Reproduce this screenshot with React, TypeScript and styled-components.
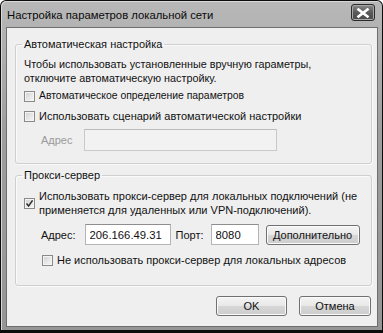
import styled, { createGlobalStyle } from "styled-components";

const GlobalStyle = createGlobalStyle`
  html, body {
    margin: 0;
    padding: 0;
    background: #ffffff;
  }
  body {
    font-family: "Liberation Sans", Arial, sans-serif;
    font-size: 11px;
    color: #111;
  }
`;

export default function App() {
  return (
    <>
      <GlobalStyle />
      <Window>
        <TitleBar>
          <Title>Настройка параметров локальной сети</Title>
          <CloseButton aria-label="Закрыть">
            <svg width="14" height="10" viewBox="0 0 14 10">
              <path d="M2.5 1.5 L11.5 8.5 M11.5 1.5 L2.5 8.5" stroke="#fff" strokeWidth="2.6" strokeLinecap="square" />
            </svg>
          </CloseButton>
        </TitleBar>
        <Body>
          <Group $bottom={12}>
            <Legend>Автоматическая настройка</Legend>
            <Hint>
              Чтобы использовать установленные вручную гараметры,
              <br />
              отключите автоматическую настройку.
            </Hint>
            <CheckRow $top={4}>
              <CheckBox />
              <Label $small>Автоматическое определение параметров</Label>
            </CheckRow>
            <CheckRow $top={6}>
              <CheckBox />
              <Label>Использовать сценарий автоматической настройки</Label>
            </CheckRow>
            <FieldRow $top={6} $indent={17}>
              <Caption $disabled $gap={11}>Адрес</Caption>
              <TextBox $width={193} $disabled readOnly value="" />
            </FieldRow>
          </Group>

          <Group $top={4} $bottom={18}>
            <Legend>Прокси-сервер</Legend>
            <CheckRow $top={6}>
              <CheckBox checked />
              <Label>
                Использовать прокси-сервер для локальных подключений (не
                <br />
                применяется для удаленных или VPN-подключений).
              </Label>
            </CheckRow>
            <FieldRow $top={7} $indent={17}>
              <Caption $gap={9}>Адрес:</Caption>
              <TextBox $width={86} readOnly value="206.166.49.31" />
              <Caption $lead={5} $gap={7}>Порт:</Caption>
              <TextBox $width={48} readOnly value="8080" />
              <Button $width={94} $lead={7}>Дополнительно</Button>
            </FieldRow>
            <CheckRow $top={8} $indent={18}>
              <CheckBox />
              <Label>Не использовать прокси-сервер для локальных адресов</Label>
            </CheckRow>
          </Group>

          <Footer>
            <Button $width={71}>OK</Button>
            <Button $width={72}>Отмена</Button>
          </Footer>
        </Body>
      </Window>
    </>
  );
}

function CheckBox({ checked = false }: { checked?: boolean }) {
  return (
    <Box>
      {checked && (
        <svg width="9" height="9" viewBox="0 0 9 9">
          <path d="M1.5 4.5 L3.6 7 L7.6 1.4" fill="none" stroke="#333" strokeWidth="1.6" />
        </svg>
      )}
    </Box>
  );
}

const Window = styled.div`
  width: 383px;
  height: 333px;
  box-sizing: border-box;
  border: 1px solid #0c0c0c;
  border-bottom-width: 3px;
  border-radius: 6px 6px 0 0;
  background: linear-gradient(180deg, #b8b8b8 0%, #9e9e9e 40%, #959595 100%);
  display: flex;
  flex-direction: column;
  padding: 0 4px 3px 5px;
  box-shadow: inset 1px 1px 0 #d8d8d8;
  overflow: hidden;
`;

const TitleBar = styled.div`
  height: 26px;
  flex: none;
  display: flex;
  align-items: center;
  justify-content: space-between;
`;

const Title = styled.div`
  font-size: 11.3px;
  color: #0a0a0a;
  padding-left: 1px;
  padding-top: 2px;
  white-space: nowrap;
`;

const CloseButton = styled.div`
  width: 22px;
  height: 15px;
  margin-top: -3px;
  margin-right: 3px;
  border: 1px solid #2a2a2a;
  border-radius: 3px;
  background: linear-gradient(180deg, #8a8a8a 0%, #5a5a5a 50%, #4a4a4a 100%);
  box-shadow: inset 0 0 0 1px #a8a8a8;
  display: flex;
  align-items: center;
  justify-content: center;
`;

const Body = styled.div`
  flex: 1;
  min-height: 0;
  background: #efefef;
  border: 1px solid #6e6e6e;
  display: flex;
  flex-direction: column;
  padding: 9px 5px 0 8px;
`;

const Group = styled.fieldset<{ $top?: number; $bottom?: number }>`
  margin: ${(p) => p.$top ?? 0}px 0 0 0;
  padding: 0 8px ${(p) => p.$bottom ?? 10}px 8px;
  border: 1px solid #cfcfcf;
  border-radius: 3px;
  box-shadow: 1px 1px 0 #fafafa, inset 1px 1px 0 #fafafa;
  min-inline-size: 0;
  display: flex;
  flex-direction: column;
`;

const Legend = styled.legend`
  padding: 0 2px;
  margin-left: -2px;
  line-height: 15px;
  color: #111;
  white-space: nowrap;
`;

const Hint = styled.div`
  margin-top: 5px;
  line-height: 14px;
  font-size: 10.8px;
  white-space: nowrap;
`;

const CheckRow = styled.div<{ $top?: number; $indent?: number }>`
  display: flex;
  align-items: center;
  gap: 4px;
  margin-top: ${(p) => p.$top ?? 0}px;
  padding-left: ${(p) => p.$indent ?? 0}px;
`;

const Box = styled.span`
  width: 11px;
  height: 11px;
  flex: none;
  box-sizing: border-box;
  border: 1px solid #8a8a8a;
  background: linear-gradient(135deg, #cfcfcf 0%, #e9e9e9 60%, #f6f6f6 100%);
  box-shadow: inset 0 0 0 1px #f4f4f4;
  display: flex;
  align-items: center;
  justify-content: center;
`;

const Label = styled.span<{ $small?: boolean }>`
  line-height: 14px;
  font-size: ${(p) => (p.$small ? 10.4 : 11)}px;
  white-space: nowrap;
`;

const FieldRow = styled.div<{ $top?: number; $indent?: number }>`
  display: flex;
  align-items: center;
  margin-top: ${(p) => p.$top ?? 0}px;
  padding-left: ${(p) => p.$indent ?? 0}px;
`;

const Caption = styled.span<{ $disabled?: boolean; $gap?: number; $lead?: number }>`
  color: ${(p) => (p.$disabled ? "#9a9a9a" : "#111")};
  margin-left: ${(p) => p.$lead ?? 0}px;
  margin-right: ${(p) => p.$gap ?? 6}px;
  white-space: nowrap;
`;

const TextBox = styled.input<{ $width: number; $disabled?: boolean }>`
  width: ${(p) => p.$width}px;
  height: ${(p) => (p.$disabled ? 22 : 21)}px;
  box-sizing: border-box;
  border: 1px solid ${(p) => (p.$disabled ? "#c9c9c9" : "#b5b5b5")};
  border-top-color: ${(p) => (p.$disabled ? "#bcbcbc" : "#8e8e8e")};
  background: ${(p) => (p.$disabled ? "#f2f2f2" : "#ffffff")};
  font-family: "Liberation Sans", Arial, sans-serif;
  font-size: 11.3px;
  color: #111;
  padding: 0 4px;
  outline: none;
`;

const Button = styled.button<{ $width: number; $lead?: number }>`
  width: ${(p) => p.$width}px;
  height: 20px;
  margin-left: ${(p) => p.$lead ?? 0}px;
  box-sizing: border-box;
  border: 1px solid #707070;
  border-radius: 3px;
  background: linear-gradient(180deg, #f4f4f4 0%, #e8e8e8 48%, #d6d6d6 52%, #cdcdcd 100%);
  box-shadow: inset 0 0 0 1px #fbfbfb;
  font-family: "Liberation Sans", Arial, sans-serif;
  font-size: 11px;
  color: #111;
  padding: 0;
  white-space: nowrap;
`;

const Footer = styled.div`
  display: flex;
  justify-content: flex-end;
  gap: 12px;
  margin-top: 10px;
  padding-right: 1px;
`;
